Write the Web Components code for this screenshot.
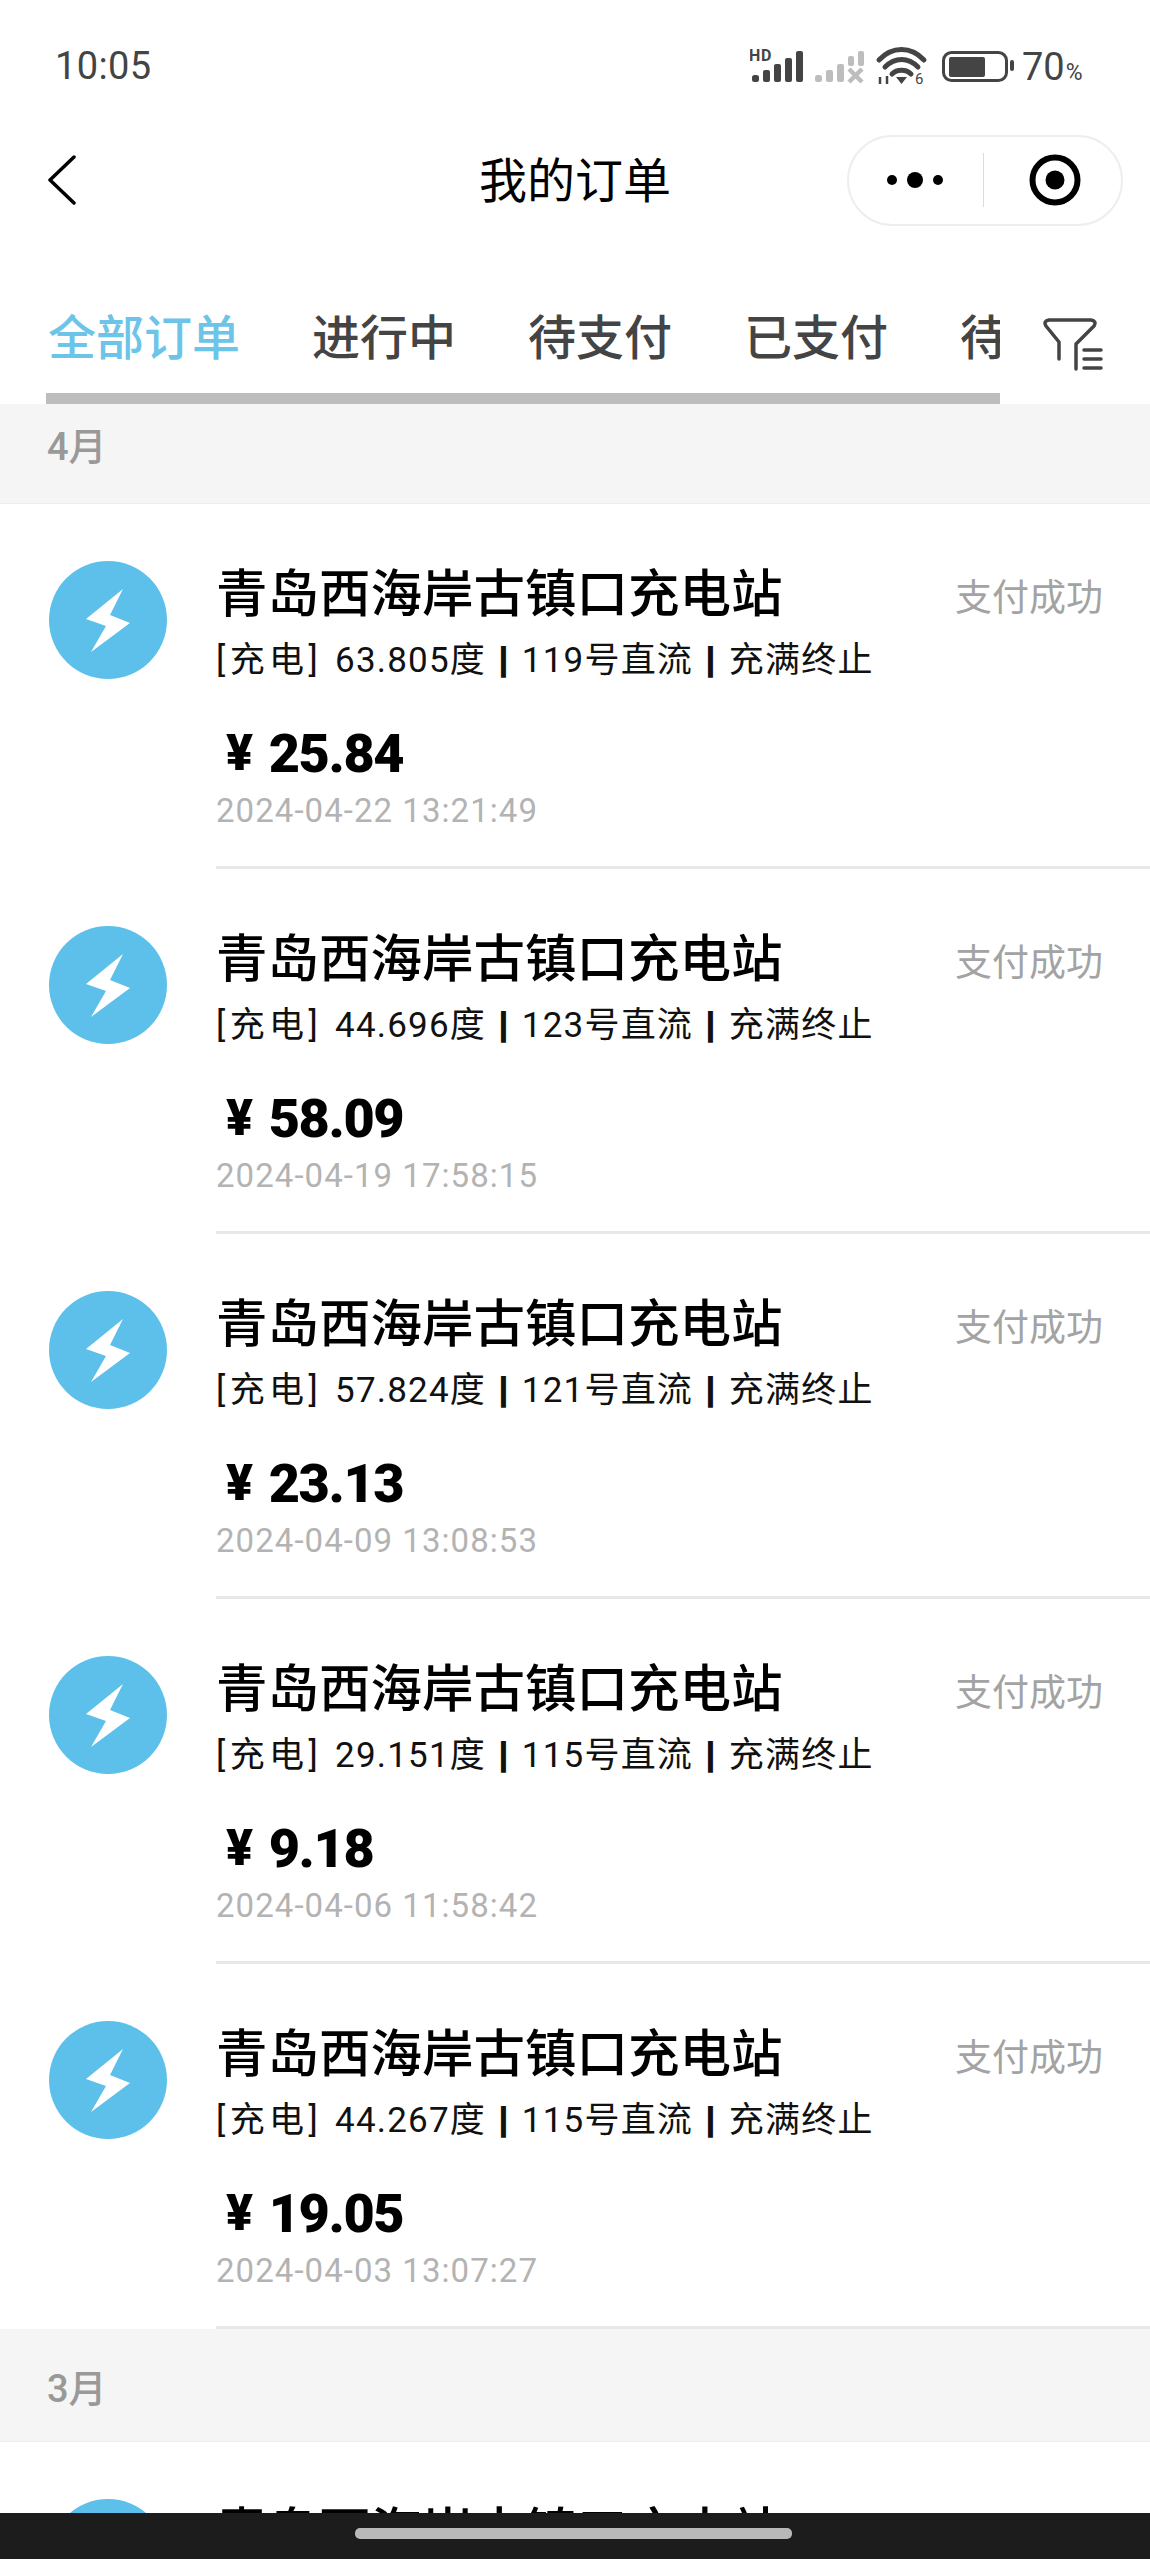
<!DOCTYPE html>
<html lang="zh">
<head>
<meta charset="utf-8">
<title>我的订单</title>
<style>
  html, body { margin: 0; padding: 0; background: #fff; overflow: hidden; }
  body {
    position: relative;
    width: 1150px;
    height: 2559px;
    font-family: Roboto, "Noto Sans CJK SC", sans-serif;
  }
</style>
</head>
<body>
  <status-bar></status-bar>
  <nav-bar>我的订单</nav-bar>
  <order-tabs>
    <span class="active">全部订单</span>
    <span>进行中</span>
    <span>待支付</span>
    <span>已支付</span>
    <span>待评价</span>
  </order-tabs>
  <month-header first>4月</month-header>
  <order-row detail="[充电] 63.805度 | 119号直流 | 充满终止" amount="25.84" time="2024-04-22 13:21:49"></order-row>
  <order-row detail="[充电] 44.696度 | 123号直流 | 充满终止" amount="58.09" time="2024-04-19 17:58:15"></order-row>
  <order-row detail="[充电] 57.824度 | 121号直流 | 充满终止" amount="23.13" time="2024-04-09 13:08:53"></order-row>
  <order-row detail="[充电] 29.151度 | 115号直流 | 充满终止" amount="9.18" time="2024-04-06 11:58:42"></order-row>
  <order-row detail="[充电] 44.267度 | 115号直流 | 充满终止" amount="19.05" time="2024-04-03 13:07:27"></order-row>
  <month-header>3月</month-header>
  <order-row class="cut"></order-row>
  <home-bar></home-bar>

<script>
const CJK = 'Roboto, "Noto Sans CJK SC", sans-serif';

class StatusBar extends HTMLElement {
  constructor() {
    super();
    this.attachShadow({ mode: 'open' });
    this.shadowRoot.innerHTML = `
    <style>
      :host {
        display: flex;
        align-items: center;
        justify-content: space-between;
        height: 130px;
        box-sizing: border-box;
        padding: 0 65px 0 55px;
        color: #444;
        font-family: ${CJK};
      }
      .time { font-size: 38px; letter-spacing: 0.4px; padding-top: 2px; }
      .icons { display: flex; align-items: center; }
      svg { display: block; }
      .pct { width: 63px; font-size: 38px; white-space: nowrap; padding-top: 3px; }
      .pct small { font-size: 23px; margin-left: 1px; }
    </style>
    <span class="time">10:05</span>
    <div class="icons">
      <svg width="272" height="70" viewBox="750 30 272 70">
        <text x="749" y="61" font-size="16" font-weight="700" letter-spacing="0.8" fill="#444" font-family="Roboto, sans-serif">HD</text>
        <g fill="#444">
          <rect x="752" y="75" width="7" height="7" rx="2.5"/>
          <rect x="763" y="70" width="7" height="12" rx="2"/>
          <rect x="774" y="64" width="7" height="18" rx="2"/>
          <rect x="785" y="58" width="7" height="24" rx="2"/>
          <rect x="796" y="51" width="7" height="31" rx="2"/>
        </g>
        <g fill="#bdbdbd">
          <rect x="815" y="75" width="7" height="7" rx="2.5"/>
          <rect x="826" y="70" width="7" height="12" rx="2"/>
          <rect x="837" y="64" width="7" height="18" rx="2"/>
          <rect x="848" y="56" width="6" height="10" rx="2"/>
          <rect x="858" y="51" width="6" height="15" rx="2"/>
          <path d="M849 69 L862 82 M862 69 L849 82" stroke="#bdbdbd" stroke-width="4.5" fill="none"/>
        </g>
        <g fill="none" stroke="#444" stroke-width="5" stroke-linecap="round">
          <path d="M879 60 C892 46 911 46 924 60"/>
          <path d="M885 67 C895 57 908 57 918 67"/>
          <path d="M892 74 C897 69 906 69 911 74"/>
        </g>
        <path d="M896 77 L907 77 L901.5 84 Z" fill="#444"/>
        <path d="M880 77 V84 M887 76 V84" stroke="#444" stroke-width="2.5"/>
        <text x="915" y="84" font-size="15" fill="#444" font-family="Roboto, sans-serif">6</text>
        <rect x="943.5" y="52.5" width="63" height="28" rx="8" fill="none" stroke="#444" stroke-width="3"/>
        <rect x="949" y="57" width="36" height="20" rx="2" fill="#444"/>
        <rect x="1010" y="60" width="4" height="11" rx="2" fill="#444"/>
      </svg>
      <span class="pct">70<small>%</small></span>
    </div>
  `;
  }
}

class NavBar extends HTMLElement {
  constructor() {
    super();
    this.attachShadow({ mode: 'open' });
    this.shadowRoot.innerHTML = `
    <style>
      :host {
        display: grid;
        grid-template-columns: 1fr auto 1fr;
        align-items: center;
        height: 120px;
        box-sizing: border-box;
        padding: 0 27px 20px 27px;
        color: #000;
        font-family: ${CJK};
      }
      .title { font-size: 48px; line-height: 60px; padding-top: 3px; }
      .back { display: block; margin-left: 19px; }
      .capsule {
        justify-self: end;
        display: flex;
        align-items: center;
        width: 276px;
        height: 91px;
        box-sizing: border-box;
        border: 2px solid #eeeeee;
        border-radius: 46px;
        background: #fff;
      }
      .half { flex: 1; display: flex; align-items: center; justify-content: center; }
      .half.dots { padding-right: 2px; }
      .half.target { padding-left: 5px; }
      .rule { width: 1px; height: 54px; background: #dcdcdc; }
    </style>
    <svg class="back" width="32" height="50" viewBox="0 0 32 50">
      <path d="M28 2 L4 25 L28 48" fill="none" stroke="#000" stroke-width="3.5" stroke-linecap="round" stroke-linejoin="round"/>
    </svg>
    <div class="title"><slot></slot></div>
    <div class="capsule">
      <div class="half dots">
        <svg width="56" height="20" viewBox="0 0 56 20">
          <circle cx="5" cy="10" r="5"/><circle cx="28" cy="10" r="8"/><circle cx="51" cy="10" r="5"/>
        </svg>
      </div>
      <div class="rule"></div>
      <div class="half target">
        <svg width="54" height="54" viewBox="0 0 54 54">
          <circle cx="27" cy="27" r="22.5" fill="none" stroke="#000" stroke-width="6"/>
          <circle cx="27" cy="27" r="9.5"/>
        </svg>
      </div>
    </div>
  `;
  }
}

class OrderTabs extends HTMLElement {
  constructor() {
    super();
    this.attachShadow({ mode: 'open' });
    this.shadowRoot.innerHTML = `
    <style>
      :host {
        display: flex;
        box-sizing: border-box;
        height: 154px;
        padding-left: 46px;
        font-family: ${CJK};
      }
      .scroller { width: 954px; display: flex; flex-direction: column; }
      .labels {
        display: flex;
        gap: 72px;
        margin-top: 61px;
        height: 56px;
        padding-left: 2px;
        overflow: hidden;
        font-size: 48px;
        line-height: 56px;
        font-weight: 500;
        color: #444;
        white-space: nowrap;
      }
      ::slotted(span) { flex: none; }
      ::slotted(.active) { color: #6cc4e8; }
      .track { height: 11px; margin-top: 26px; background: #bdbdbd; }
      .filter { display: block; margin: 68px 0 0 43px; }
    </style>
    <div class="scroller">
      <div class="labels"><slot></slot></div>
      <div class="track"></div>
    </div>
    <svg class="filter" width="62" height="56" viewBox="0 0 62 56">
      <g fill="none" stroke="#444" stroke-width="3.5" stroke-linecap="round" stroke-linejoin="round">
        <path d="M16 41 V24 L3 8 Q0 3 6 2 H48 Q54 3 51 8 L33 26 V51"/>
        <path d="M41 32 H58 M41 41 H58 M41 50 H58"/>
      </g>
    </svg>
  `;
  }
}

class MonthHeader extends HTMLElement {
  constructor() {
    super();
    this.attachShadow({ mode: 'open' });
    this.shadowRoot.innerHTML = `
    <style>
      :host {
        display: flex;
        align-items: center;
        box-sizing: border-box;
        height: 113px;
        padding-left: 47px;
        background: #f5f5f5;
        border-bottom: 1px solid #eeeeee;
        color: #999;
        font-family: ${CJK};
        font-size: 38px;
        font-weight: 500;
      }
      :host([first]) { height: 100px; padding-bottom: 20px; }
    </style>
    <slot></slot>
  `;
  }
}

class OrderRow extends HTMLElement {
  constructor() {
    super();
    this.attachShadow({ mode: 'open' });
    this.shadowRoot.innerHTML = `
    <style>
      :host {
        display: flex;
        height: 365px;
        padding-left: 49px;
        gap: 49px;
        background: #fff;
        font-family: ${CJK};
      }
      .logo { flex: none; margin-top: 57px; }
      .body {
        flex: 1;
        box-sizing: border-box;
        border-bottom: 3px solid #e8e8e8;
        padding-top: 61px;
      }
      .top { display: flex; justify-content: space-between; align-items: center; height: 60px; padding-right: 47px; }
      .name { font-size: 51.5px; line-height: 60px; font-weight: 500; color: #000; }
      .state { font-size: 37px; color: #a3a3a3; }
      .detail { font-size: 35px; line-height: 42px; margin-top: 15px; color: #111; white-space: nowrap; letter-spacing: 1.2px; word-spacing: 3px; }
      .detail i { font-style: normal; letter-spacing: 4.4px; }
      .detail b { font-weight: 700; -webkit-text-stroke: 2px #111; }
      .amount { display: flex; align-items: center; gap: 17px; margin-top: 41px; padding-left: 10px; height: 60px; font-size: 54px; font-weight: 900; color: #000; letter-spacing: -1.4px; }
      .yen { font-size: 50px; }
      .time { font-size: 33px; line-height: 40px; margin-top: 8px; color: #b3b3b3; letter-spacing: 1.05px; }
    </style>
    <svg class="logo" width="118" height="118" viewBox="0 0 118 118">
      <circle cx="59" cy="59" r="59" fill="#5cc0ea"/>
      <path d="M74 28 L37 58 L57 65 L42 91 L81 62 L61 54 Z" fill="#fff"/>
    </svg>
    <div class="body">
      <div class="top"><span class="name">青岛西海岸古镇口充电站</span><span class="state">支付成功</span></div>
      <div class="detail"></div>
      <div class="amount"><span class="yen">¥</span><span class="num"></span></div>
      <div class="time"></div>
    </div>
  `;
  }

  connectedCallback() {
    const root = this.shadowRoot;
    // the bottom row only shows its title above the home bar
    if (!this.hasAttribute('amount')) {
      root.querySelector('.amount').remove();
      root.querySelector('.detail').remove();
      root.querySelector('.time').remove();
      root.querySelector('.state').remove();
      return;
    }
    const detail = root.querySelector('.detail');
    const text = this.getAttribute('detail');
    const tagEnd = text.indexOf(']') + 1;
    const tag = document.createElement('i');
    tag.textContent = text.slice(0, tagEnd);
    detail.append(tag);
    text.slice(tagEnd).split('|').forEach((part, i) => {
      if (i > 0) {
        const pipe = document.createElement('b');
        pipe.textContent = '|';
        detail.append(pipe);
      }
      detail.append(part);
    });
    root.querySelector('.num').textContent = this.getAttribute('amount');
    root.querySelector('.time').textContent = this.getAttribute('time');
  }
}

class HomeBar extends HTMLElement {
  constructor() {
    super();
    this.attachShadow({ mode: 'open' });
    this.shadowRoot.innerHTML = `
    <style>
      :host {
        position: absolute;
        left: 0;
        right: 0;
        bottom: 0;
        height: 46px;
        display: flex;
        justify-content: center;
        padding-top: 15px;
        box-sizing: border-box;
        background: #1c1c1c;
      }
      .pill { width: 437px; height: 11px; border-radius: 5px; background: #b8b8b8; transform: translateX(-2px); }
    </style>
    <div class="pill"></div>
  `;
  }
}

customElements.define('status-bar', StatusBar);
customElements.define('nav-bar', NavBar);
customElements.define('order-tabs', OrderTabs);
customElements.define('month-header', MonthHeader);
customElements.define('order-row', OrderRow);
customElements.define('home-bar', HomeBar);
</script>
</body>
</html>
